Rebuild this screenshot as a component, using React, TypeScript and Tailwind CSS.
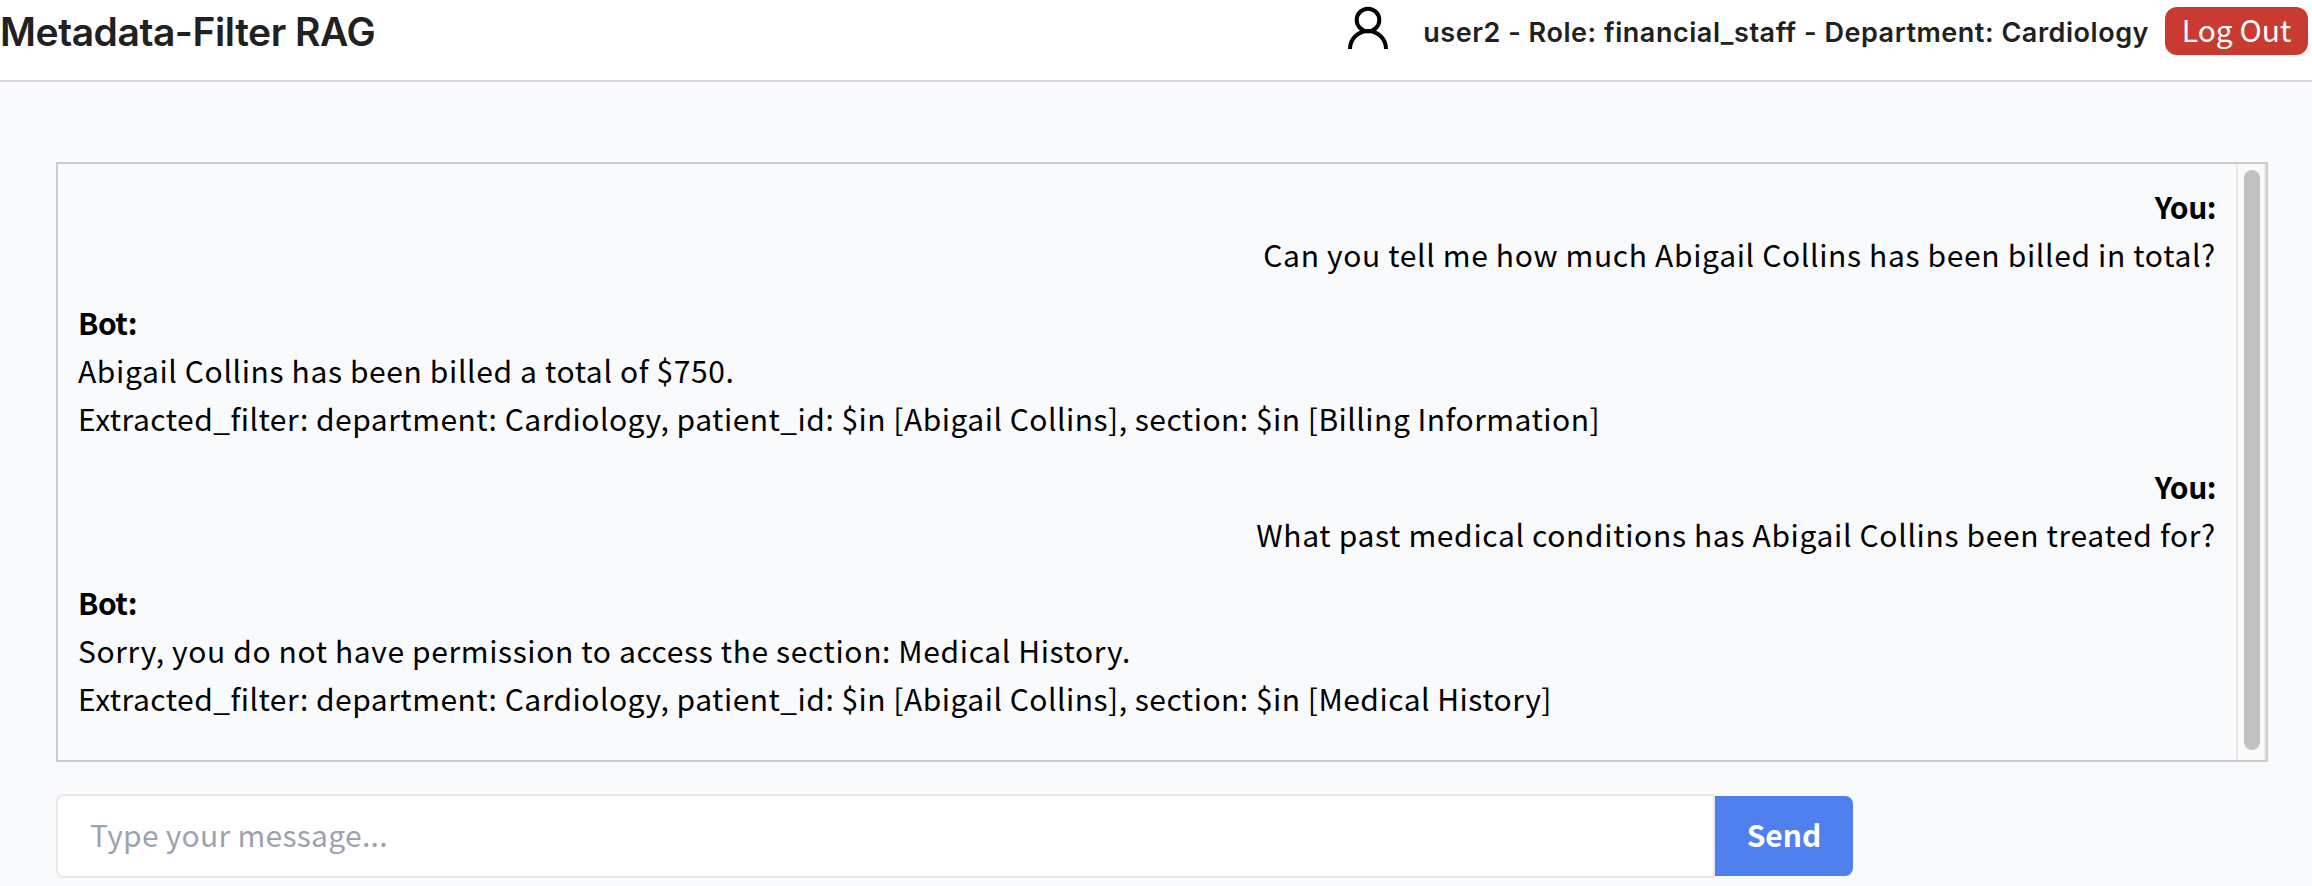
type Message = { from: 'You' | 'Bot'; lines: { text: string; tracking: string }[] };

const messages: Message[] = [
  {
    from: 'You',
    lines: [{ text: 'Can you tell me how much Abigail Collins has been billed in total?', tracking: 'tracking-[0.66px]' }],
  },
  {
    from: 'Bot',
    lines: [
      { text: 'Abigail Collins has been billed a total of $750.', tracking: 'tracking-[0.63px]' },
      {
        text: 'Extracted_filter: department: Cardiology, patient_id: $in [Abigail Collins], section: $in [Billing Information]',
        tracking: 'tracking-[0.49px]',
      },
    ],
  },
  {
    from: 'You',
    lines: [{ text: 'What past medical conditions has Abigail Collins been treated for?', tracking: 'tracking-[0.66px]' }],
  },
  {
    from: 'Bot',
    lines: [
      { text: 'Sorry, you do not have permission to access the section: Medical History.', tracking: 'tracking-[0.62px]' },
      {
        text: 'Extracted_filter: department: Cardiology, patient_id: $in [Abigail Collins], section: $in [Medical History]',
        tracking: 'tracking-[0.49px]',
      },
    ],
  },
];

function UserIcon() {
  return (
    <svg width="48" height="48" viewBox="0 0 48 48" fill="none" stroke="#000" strokeWidth="4" className="shrink-0">
      <circle cx="24" cy="16" r="11.3" />
      <path d="M6 45a18 18 0 0 1 36 0" />
    </svg>
  );
}

function Header() {
  return (
    <header className="flex h-[82px] items-start justify-between border-b-2 border-[#d9d9db] bg-white pr-1 font-[Inter,sans-serif] font-semibold text-[#212121]">
      <h1 className="whitespace-nowrap text-[39px] leading-[64px] tracking-[-0.45px]">Metadata-Filter RAG</h1>
      <div className="flex items-start">
        <div className="mt-1 mr-[31px]">
          <UserIcon />
        </div>
        <span className="mr-4 whitespace-nowrap pt-px text-[27px] leading-[64px] tracking-[0.54px]">
          user2 - Role: financial_staff - Department: Cardiology
        </span>
        <button className="mt-[7px] h-12 w-[143px] rounded-xl bg-[#c93a31] pb-[3px] font-['Noto_Sans_CJK_SC',sans-serif] text-[30px] leading-[45px] font-normal whitespace-nowrap text-white">
          Log Out
        </button>
      </div>
    </header>
  );
}

function ChatWindow() {
  return (
    <section className="flex h-[600px] border-2 border-[#cbcccf]">
      <div className="flex flex-1 flex-col gap-5 px-5 pt-[18px]">
        {messages.map((message, i) => (
          <div key={i} className={message.from === 'You' ? 'text-right' : 'text-left'}>
            <p className="h-12 font-bold tracking-[-0.5px]">{message.from}:</p>
            {message.lines.map((line) => (
              <p key={line.text} className="h-12 whitespace-nowrap">
                <span className={line.tracking}>{line.text}</span>
              </p>
            ))}
          </div>
        ))}
      </div>
      <div className="flex w-[30px] border-x-2 border-[#e8e8e8] bg-[#fafafa] pt-1.5 pb-2.5 pl-1.5">
        <div className="w-4 rounded-full bg-[#c1c1c1]" />
      </div>
    </section>
  );
}

function Composer() {
  return (
    <form className="mt-8 flex items-center">
      <input
        type="text"
        placeholder="Type your message..."
        className="h-[84px] w-[1659px] rounded-l-lg border-2 border-[#e5e7eb] bg-white px-8 pb-1 tracking-[0.28px] placeholder:text-[#9ca3af]"
      />
      <button type="button" className="h-20 w-[138px] rounded-r-lg bg-[#4f80ed] pb-1 font-bold text-white">
        Send
      </button>
    </form>
  );
}

export default function App() {
  return (
    <div className="h-[886px] overflow-hidden bg-[#f9fafc]">
      <Header />
      <main className="px-14 pt-20 pr-11 font-['Noto_Sans_CJK_SC',sans-serif] text-[30px] leading-[48px] text-black">
        <ChatWindow />
        <Composer />
      </main>
    </div>
  );
}
